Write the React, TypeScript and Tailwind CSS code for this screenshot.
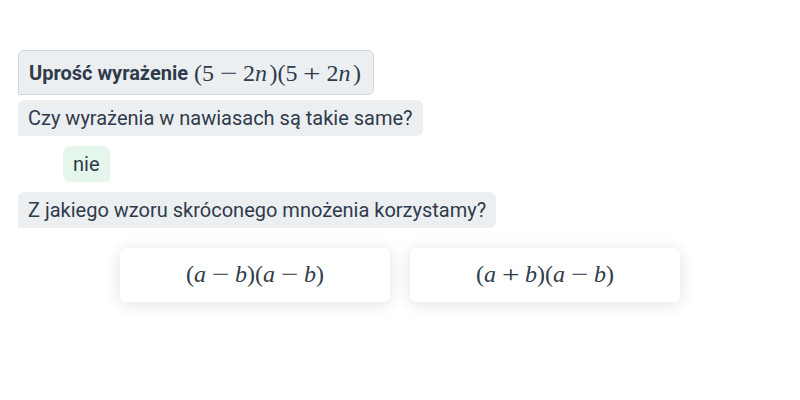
import React from "react";

const M = ({ children }: { children: React.ReactNode }) => (
  <span className="text-[24px] font-normal leading-none" style={{ fontFamily: '"Liberation Serif", "DejaVu Serif", serif' }}>
    {children}
  </span>
);
const V = ({ c }: { c: string }) => <i className="italic">{c}</i>;
const N = () => <i className="italic inline-block w-[14.5px]">n</i>;
const Op = ({ c }: { c: string }) => (
  <span className="inline-block w-[29px] text-center">
    <span className="inline-block scale-x-[1.3]">{c}</span>
  </span>
);

export default function App() {
  return (
    <div
      className="w-[800px] h-[400px] bg-white text-[#2f3b4a] pt-[50px] pl-[18px]"
      style={{ fontFamily: "Roboto, sans-serif" }}
    >
      <div className="flex flex-col items-start">
        <div className="h-[45px] flex items-center pl-[10px] pr-[12px] bg-[#eceff1] border border-[#cfd8dc] rounded-t-[6px] rounded-br-[6px] text-[20px] font-bold">
          <span className="mr-[6px]">Uprość wyrażenie</span>
          <M>
            (5<Op c="−" />2<N />)(5<Op c="+" />2<N />)
          </M>
        </div>
        <div className="mt-[5px] h-[36px] flex items-center px-[10px] bg-[#eceff1] rounded-t-[6px] rounded-br-[6px] text-[20px]">
          Czy wyrażenia w nawiasach są takie same?
        </div>
        <div className="mt-[10px] ml-[45px] h-[36px] flex items-center px-[10px] bg-[#e5f6ec] rounded-l-[8px] rounded-tr-[8px] text-[20px]">
          nie
        </div>
        <div className="mt-[10px] h-[36px] flex items-center px-[10px] bg-[#eceff1] rounded-t-[6px] rounded-br-[6px] text-[20px]">
          Z jakiego wzoru skróconego mnożenia korzystamy?
        </div>
      </div>
      <div className="mt-[20px] -ml-[18px] flex justify-center gap-[20px]">
        <div className="w-[270px] h-[54px] bg-white rounded-[6px] shadow-[0_2px_16px_rgba(0,0,0,0.12)] flex items-center justify-center pb-[3px]">
          <M>
            (<V c="a" /><Op c="−" /><V c="b" />)(<V c="a" /><Op c="−" /><V c="b" />)
          </M>
        </div>
        <div className="w-[270px] h-[54px] bg-white rounded-[6px] shadow-[0_2px_16px_rgba(0,0,0,0.12)] flex items-center justify-center pb-[3px]">
          <M>
            (<V c="a" /><Op c="+" /><V c="b" />)(<V c="a" /><Op c="−" /><V c="b" />)
          </M>
        </div>
      </div>
    </div>
  );
}
